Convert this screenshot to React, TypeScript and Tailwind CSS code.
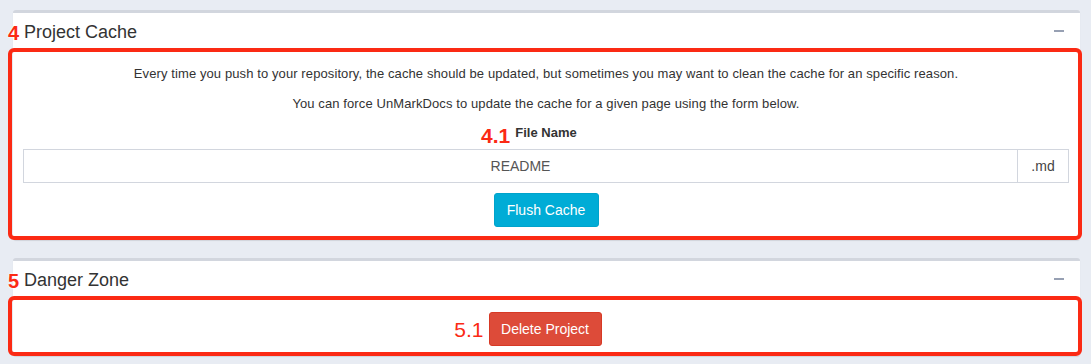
import React from "react";

const font = { fontFamily: '"Liberation Sans", Arial, sans-serif' };

function Num({ children, className = "" }: { children: React.ReactNode; className?: string }) {
  return (
    <span
      className={`absolute text-[#fb2a14] leading-none [text-shadow:0_0_2px_#fff,0_0_2px_#fff,0_0_1px_#fff] ${className}`}
    >
      {children}
    </span>
  );
}

function Minus() {
  return <span className="absolute right-[16px] top-[17px] block h-[2px] w-[10px] bg-[#97a0b3]" />;
}

export default function App() {
  return (
    <div className="min-h-screen w-full bg-[#e8ecf3] pt-[10px] pl-[13px] pr-[11px] text-[#333]" style={font}>
      {/* Box 1 */}
      <div className="relative rounded-[3px] border-t-[3px] border-[#d2d6de] bg-white shadow-[0_1px_1px_rgba(0,0,0,0.1)]">
        <div className="relative flex h-[35px] items-center pl-[11px] pt-[3px]">
          <Num className="left-[-5px] top-[10px] text-[20px] font-bold">4</Num>
          <h3 className="text-[18px] leading-none text-[#333]">Project Cache</h3>
          <Minus />
        </div>
        <div className="-ml-[5px] -mr-[2px] -mb-[2px] rounded-[6px] border-4 border-[#fb2a14] pt-[12px] pb-[9px] pl-[11px] pr-[9px] text-[13px] text-[#333]">
          <p className="text-center leading-[20px] tracking-[0.1px]">
            Every time you push to your repository, the cache should be updated, but sometimes you may want to clean the cache for an specific reason.
          </p>
          <p className="mt-[10px] text-center leading-[20px] tracking-[0.1px]">
            You can force UnMarkDocs to update the cache for a given page using the form below.
          </p>
          <div className="mt-[9px] flex justify-center">
            <span className="relative font-bold leading-[20px]">
              <Num className="right-[calc(100%+5px)] top-[2px] text-[21px]">4.1</Num>
              File Name
            </span>
          </div>
          <div className="mt-[6px] flex h-[34px]">
            <div className="flex flex-1 items-center justify-center border border-[#d2d6de] text-[14px] text-[#555]">
              README
            </div>
            <div className="flex w-[51px] items-center justify-center border border-l-0 border-[#d2d6de] text-[14px] text-[#444]">
              .md
            </div>
          </div>
          <div className="mt-[10px] flex justify-center">
            <button className="h-[34px] w-[105px] rounded-[3px] border border-[#00a3cb] bg-[#00acd6] text-[14px] text-white">
              Flush Cache
            </button>
          </div>
        </div>
      </div>

      {/* Box 2 */}
      <div className="relative mt-[20px] rounded-[3px] border-t-[3px] border-[#d2d6de] bg-white shadow-[0_1px_1px_rgba(0,0,0,0.1)]">
        <div className="relative flex h-[35px] items-center pl-[11px] pt-[3px]">
          <Num className="left-[-5px] top-[10px] text-[20px] font-bold">5</Num>
          <h3 className="text-[18px] leading-none text-[#333]">Danger Zone</h3>
          <Minus />
        </div>
        <div className="-ml-[5px] -mr-[2px] -mb-[2px] rounded-[6px] border-4 border-[#fb2a14] pt-[12px] pb-[6px]">
          <div className="flex justify-center">
            <span className="relative">
              <Num className="right-[calc(100%+5px)] top-[7px] text-[21px]">5.1</Num>
              <button className="h-[34px] w-[113px] rounded-[3px] border border-[#d73925] bg-[#dd4b39] text-[14px] text-white">
                Delete Project
              </button>
            </span>
          </div>
        </div>
      </div>
    </div>
  );
}
